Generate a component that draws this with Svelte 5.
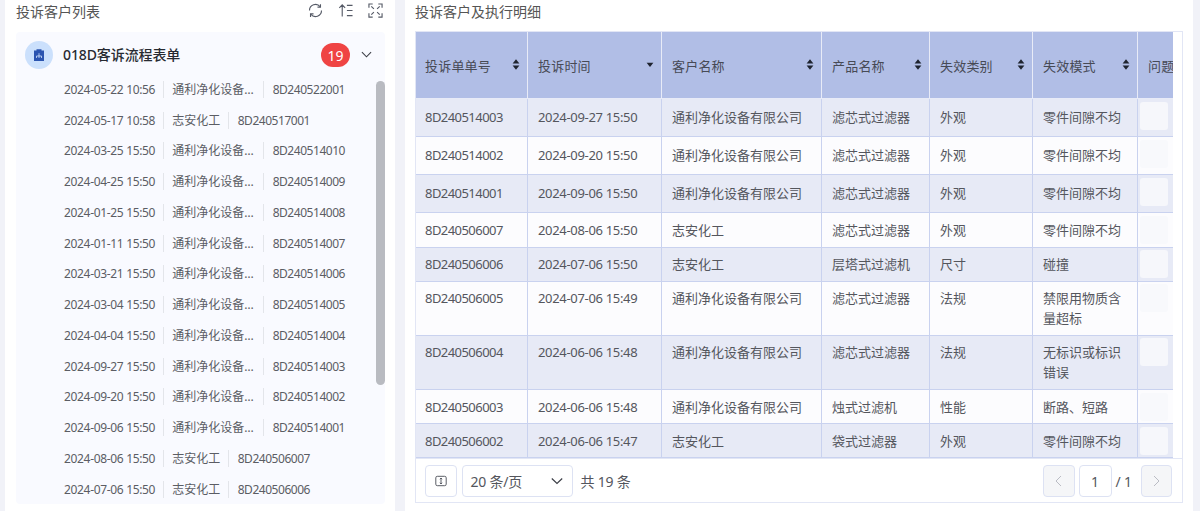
<script>
  const list = [
    ['2024-05-22 10:56', '通利净化设备有限公司', '8D240522001'],
    ['2024-05-17 10:58', '志安化工', '8D240517001'],
    ['2024-03-25 15:50', '通利净化设备有限公司', '8D240514010'],
    ['2024-04-25 15:50', '通利净化设备有限公司', '8D240514009'],
    ['2024-01-25 15:50', '通利净化设备有限公司', '8D240514008'],
    ['2024-01-11 15:50', '通利净化设备有限公司', '8D240514007'],
    ['2024-03-21 15:50', '通利净化设备有限公司', '8D240514006'],
    ['2024-03-04 15:50', '通利净化设备有限公司', '8D240514005'],
    ['2024-04-04 15:50', '通利净化设备有限公司', '8D240514004'],
    ['2024-09-27 15:50', '通利净化设备有限公司', '8D240514003'],
    ['2024-09-20 15:50', '通利净化设备有限公司', '8D240514002'],
    ['2024-09-06 15:50', '通利净化设备有限公司', '8D240514001'],
    ['2024-08-06 15:50', '志安化工', '8D240506007'],
    ['2024-07-06 15:50', '志安化工', '8D240506006']
  ];
  const heads = [
    { t: '投诉单单号', s: 'both' },
    { t: '投诉时间', s: 'down' },
    { t: '客户名称', s: 'both' },
    { t: '产品名称', s: 'both' },
    { t: '失效类别', s: 'both' },
    { t: '失效模式', s: 'both' },
    { t: '问题', s: '' }
  ];
  const rows = [
    ['8D240514003', '2024-09-27 15:50', '通利净化设备有限公司', '滤芯式过滤器', '外观', '零件间隙不均', 'a'],
    ['8D240514002', '2024-09-20 15:50', '通利净化设备有限公司', '滤芯式过滤器', '外观', '零件间隙不均', 'a'],
    ['8D240514001', '2024-09-06 15:50', '通利净化设备有限公司', '滤芯式过滤器', '外观', '零件间隙不均', 'a'],
    ['8D240506007', '2024-08-06 15:50', '志安化工', '滤芯式过滤器', '外观', '零件间隙不均', 'b'],
    ['8D240506006', '2024-07-06 15:50', '志安化工', '层塔式过滤机', '尺寸', '碰撞', 'c'],
    ['8D240506005', '2024-07-06 15:49', '通利净化设备有限公司', '滤芯式过滤器', '法规', '禁限用物质含量超标', 'd'],
    ['8D240506004', '2024-06-06 15:48', '通利净化设备有限公司', '滤芯式过滤器', '法规', '无标识或标识错误', 'd'],
    ['8D240506003', '2024-06-06 15:48', '通利净化设备有限公司', '烛式过滤机', '性能', '断路、短路', 'e'],
    ['8D240506002', '2024-06-06 15:47', '志安化工', '袋式过滤器', '外观', '零件间隙不均', 'e']
  ];
</script>

<div class="page">
  <section class="panel left">
    <header class="ptitle">
      <h2>投诉客户列表</h2>
      <div class="tools">
        <svg viewBox="0 0 16 16" class="tool"><path d="M1.6 8a6.4 6.4 0 0 1 11.4-4M14.4 8A6.4 6.4 0 0 1 3 12" /><path d="M13.3 1.2v3.2h-3.2M2.7 14.8v-3.2h3.2" /></svg>
        <svg viewBox="0 0 16 16" class="tool"><path d="M4.5 14.5V2M1.4 5.2 4.5 2l3.1 3.2M9.5 2.5h6M9.5 8h6M9.5 13.5h6" /></svg>
        <svg viewBox="0 0 16 16" class="tool"><path d="M1 5V1h4M11 1h4v4M15 11v4h-4M5 15H1v-4M3.5 3.5l2.8 2.8M12.5 3.5 9.7 6.3M12.5 12.5 9.7 9.7M3.5 12.5l2.8-2.8" /></svg>
      </div>
    </header>
    <div class="card">
      <div class="chead">
        <span class="avatar">
          <svg viewBox="0 0 10 12"><path d="M0 1.5h2.5V.2h5v1.3H10V12H0z" fill="#2b54b0" /><path d="M5 4.2v2M2.5 9V7h5v2M5 6v3" stroke="#cfe2fb" stroke-width=".8" fill="none" /></svg>
        </span>
        <span class="ctitle">018D客诉流程表单</span>
        <span class="badge">19</span>
        <svg viewBox="0 0 12 12" class="chev"><path d="M1 3.5 6 8.5 11 3.5" /></svg>
      </div>
      <div class="listwrap">
        <ul>
          {#each list as [d, c, n]}
            <li>
              <span class="d">{d}</span>
              <span class="c">{c}</span>
              <span class="n">{n}</span>
            </li>
          {/each}
        </ul>
        <div class="thumb"></div>
      </div>
    </div>
  </section>

  <section class="panel right">
    <header class="ptitle"><h2>投诉客户及执行明细</h2></header>
    <div class="tablebox">
      <div class="tablearea">
        <table>
          <colgroup>
            <col class="c1" /><col class="c2" /><col class="c3" /><col class="c4" /><col class="c5" /><col class="c6" /><col class="c7" />
          </colgroup>
          <thead>
            <tr>
              {#each heads as h}
                <th>
                  <div class="th">
                    <span class="htext">{h.t}</span>
                    {#if h.s === 'both'}
                      <svg viewBox="0 0 8 11" class="sort">
                        <path d="M4 .3 7.4 4.6H.6z" fill="#1f2430" />
                        <path d="M4 10.7 7.4 6.4H.6z" fill="#1f2430" />
                      </svg>
                    {:else if h.s === 'down'}
                      <svg viewBox="0 0 8 11" class="sort"><path d="M4 8 7.4 3.8H.6z" fill="#1f2430" /></svg>
                    {/if}
                  </div>
                </th>
              {/each}
            </tr>
          </thead>
          <tbody>
            {#each rows as r, i}
              <tr class="k{r[6]}" class:odd={i % 2 === 0}>
                <td class="id">{r[0]}</td><td class="dt">{r[1]}</td><td>{r[2]}</td><td>{r[3]}</td><td>{r[4]}</td><td>{r[5]}</td>
                <td class="bc"><span class="ghost"></span></td>
              </tr>
            {/each}
          </tbody>
        </table>
      </div>
      <footer class="pager">
        <button class="sq"><svg viewBox="0 0 12 12"><rect x=".8" y="1.3" width="10.4" height="9.4" rx="1.5" /><path d="M6 3.2v5.6M4.8 4.2 6 3l1.2 1.2M4.8 7.8 6 9l1.2-1.2" /></svg></button>
        <div class="select"><span>20 条/页</span><svg viewBox="0 0 12 12"><path d="M.8 3.5 6 8.5l5.2-5" /></svg></div>
        <span class="total">共 19 条</span>
        <span class="grow"></span>
        <button class="sq dis"><svg viewBox="0 0 12 12"><path d="M8 1 3 6l5 5" /></svg></button>
        <span class="cur">1</span>
        <span class="of">/ 1</span>
        <button class="sq dis"><svg viewBox="0 0 12 12"><path d="M4 1l5 5-5 5" /></svg></button>
      </footer>
    </div>
  </section>
</div>

<style>
  :global(body) { margin: 0; background: #f1f2f8; }
  .page {
    display: flex; gap: 10px; height: 511px; padding: 0 7px 0 5px; box-sizing: border-box; overflow: hidden;
    font-family: "Noto Sans", "Noto Sans CJK SC", sans-serif; color: #4e5058;
  }
  .panel { background: #fff; display: flex; flex-direction: column; box-sizing: border-box; padding: 0 10px; }
  .left { width: 390px; flex: none; padding-left: 11px; }
  .right { flex: 1; min-width: 0; }
  .ptitle { height: 31px; flex: none; display: flex; align-items: flex-start; justify-content: space-between; }
  .left .ptitle { height: 32px; }
  h2 { margin: 0; font-size: 14px; font-weight: 400; line-height: 24px; color: #555; }
  .tools { display: flex; gap: 15px; padding: 3px 2px 0 0; }
  .tool { width: 15px; height: 15px; fill: none; stroke: #555a66; stroke-width: 1.2; }
  .card { flex: 1; background: #f9faff; border-radius: 4px; width: 369px; margin-bottom: 7px; min-height: 0; display: flex; flex-direction: column; overflow: hidden; }
  .chead { height: 42px; flex: none; display: flex; align-items: flex-start; padding: 9px 12px 0 9px; box-sizing: border-box; }
  .avatar { width: 28px; height: 28px; border-radius: 50%; background: #cbe0fc; display: flex; align-items: center; justify-content: center; }
  .avatar svg { width: 10px; height: 12px; }
  .ctitle { margin-left: 10px; flex: 1; font-size: 14px; font-weight: 500; line-height: 28px; color: #272a31; letter-spacing: -.1px; }
  .badge { width: 29px; height: 24px; margin-top: 2px; border-radius: 12px; background: #ef4444; color: #fff; font-size: 14px; display: flex; align-items: center; justify-content: center; }
  .chev { width: 11px; height: 11px; margin: 8px 1px 0 11px; fill: none; stroke: #3c3f47; stroke-width: 1.2; }
  .listwrap { position: relative; flex: 1; min-height: 0; }
  ul { list-style: none; margin: 0; padding: 0 0 0 48px; }
  li { height: 30.75px; display: flex; align-items: center; font-size: 12px; color: #5b5d64; }
  li .d { padding-right: 8px; letter-spacing: -.33px; }
  li .c { padding: 0 8px; border-left: 1px solid #e3e5ea; line-height: 17px; max-width: 83px; white-space: nowrap; overflow: hidden; text-overflow: ellipsis; }
  li .n { padding-left: 8.5px; border-left: 1px solid #e3e5ea; line-height: 17px; letter-spacing: -.46px; }
  .thumb { position: absolute; right: 0; top: 7px; width: 9px; height: 304px; background: #b9bbc1; border-radius: 5px; }
  .tablebox { flex: 1; min-height: 0; margin-bottom: 8px; border: 1px solid #e2e6f5; display: flex; flex-direction: column; }
  .tablearea { flex: 1; min-height: 0; overflow: hidden; padding-right: 9px; }
  table { table-layout: fixed; width: 757px; border-collapse: separate; border-spacing: 0; font-size: 13px; }
  .c1 { width: 112px; } .c2 { width: 134px; } .c3 { width: 160px; } .c4 { width: 108px; } .c5 { width: 103px; } .c6 { width: 105px; } .c7 { width: 35px; }
  th { height: 67px; background: #b1bee6; font-weight: 400; text-align: left; padding: 0 7px 0 10px; border-right: 1px solid #e8ebf7; border-bottom: 1px solid #e8ebf7; box-sizing: border-box; color: #474a55; overflow: hidden; white-space: nowrap; }
  th:first-child { padding-left: 9px; }
  th:last-child { border-right: 0; padding: 0 0 0 10px; }
  .th { display: flex; align-items: center; justify-content: space-between; letter-spacing: .2px; }
  .sort { width: 8px; height: 11px; flex: none; margin-top: -2px; }
  td { padding: 6px 10px; line-height: 20px; vertical-align: top; background: #fcfcfe; border-right: 1px solid #c9d2ef; border-bottom: 1px solid #c9d2ef; box-sizing: border-box; color: #54565d; }
  td:first-child { padding-left: 9px; }
  td.id { letter-spacing: -.55px; }
  td.dt { letter-spacing: -.32px; }
  td:last-child { border-right: 0; }
  tr.odd td { background: #e7eaf6; }
  .ka td { height: 38px; padding-top: 8px; }
  .kb td { height: 35px; padding-top: 7px; }
  .kc td { height: 34px; }
  .kd td { height: 54px; }
  .ke td { height: 34px; padding-top: 7px; }
  td.bc { padding: 2px 0 0 2px; }
  .ka td.bc, .kb td.bc, .ke td.bc { padding-top: 3px; }
  .ghost { display: block; height: 28px; width: 28px; border-radius: 3px; background: #f8f9fc; }
  tr.odd .ghost { background: #f6f7fb; }
  .pager { height: 44px; flex: none; display: flex; align-items: center; padding: 1px 10px 0 9px; box-sizing: border-box; border-top: 1px solid #e2e6f5; font-size: 14px; color: #54565d; letter-spacing: -.2px; }
  .sq { width: 31.5px; height: 32px; padding: 0; background: #fff; border: 1px solid #dde2f3; border-radius: 4px; display: flex; align-items: center; justify-content: center; box-sizing: border-box; }
  .sq svg { width: 12px; height: 12px; fill: none; stroke: #5b5e66; stroke-width: 1; }
  .sq.dis { background: #f5f6f8; }
  .sq.dis svg { stroke: #babcc4; }
  .select { width: 111px; height: 32px; margin-left: 5px; border: 1px solid #dde2f3; border-radius: 4px; box-sizing: border-box; display: flex; align-items: center; justify-content: space-between; padding: 0 9px 0 8px; }
  .select svg { width: 12px; height: 12px; fill: none; stroke: #3c3f47; stroke-width: 1.2; }
  .total { margin-left: 8px; }
  .grow { flex: 1; }
  .cur { width: 33px; height: 32px; margin-left: 4px; border: 1px solid #dde2f3; border-radius: 4px; box-sizing: border-box; display: flex; align-items: center; justify-content: center; }
  .of { width: 29px; padding-left: 4px; box-sizing: border-box; text-align: left; }
</style>
